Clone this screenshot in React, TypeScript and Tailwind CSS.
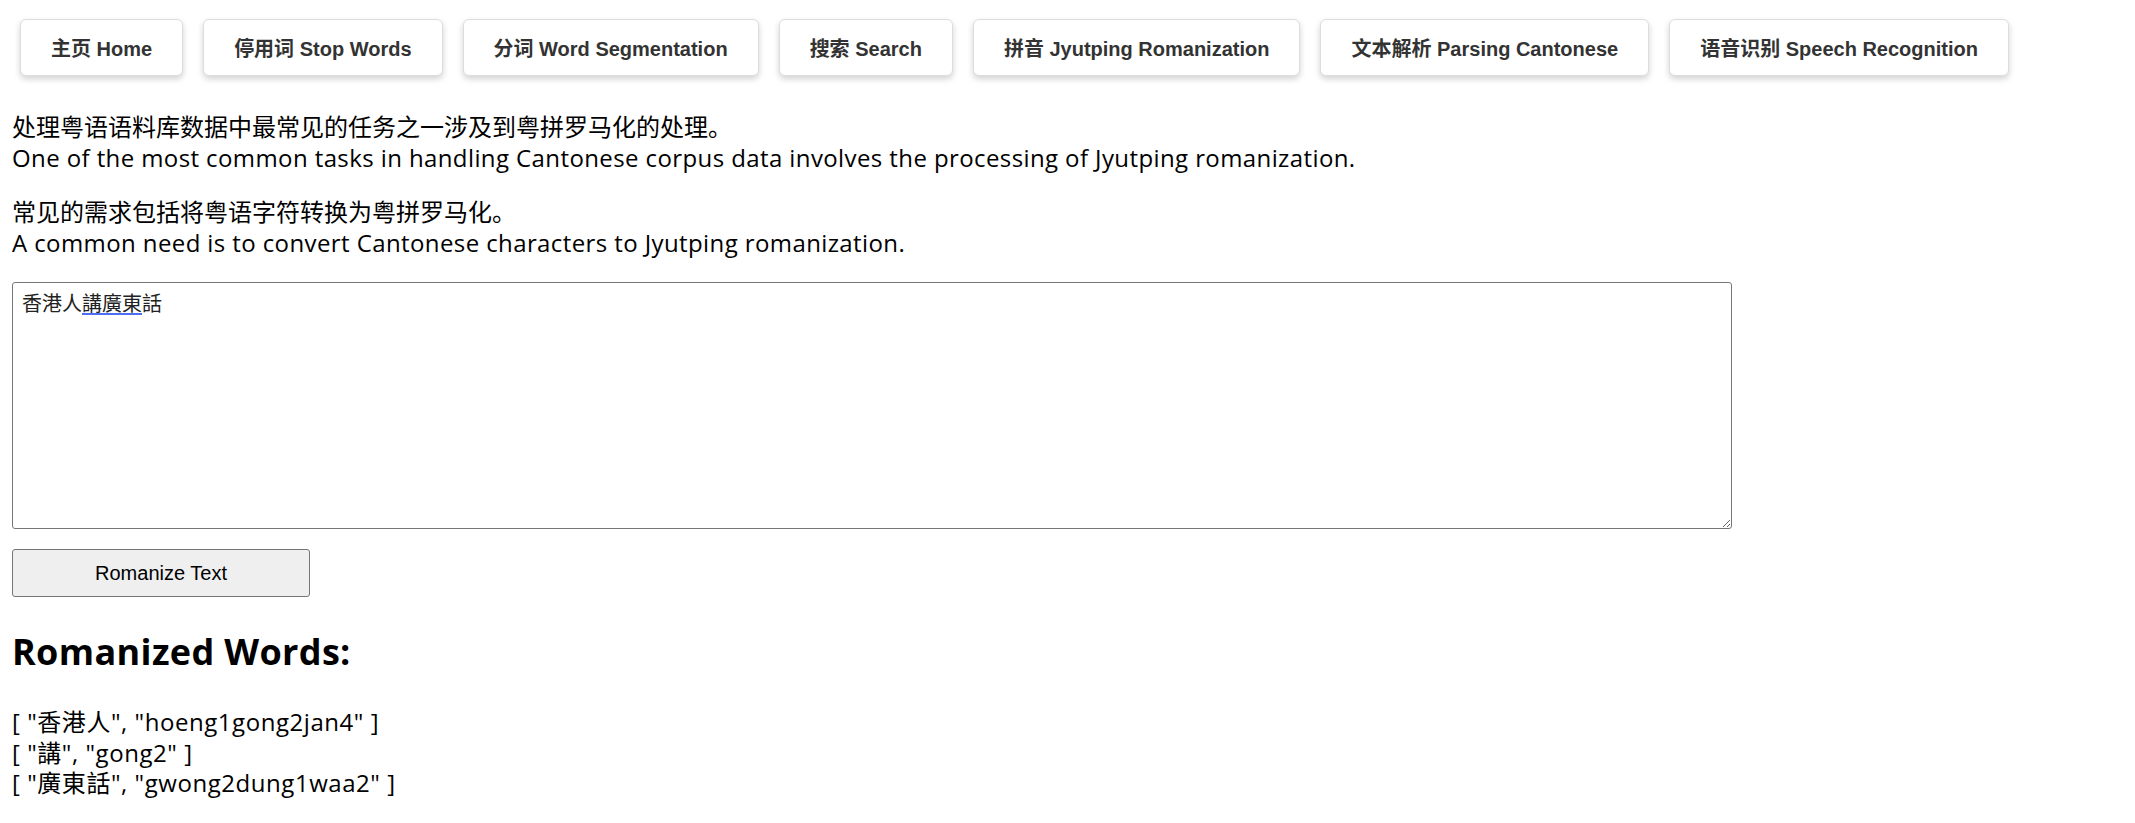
import React from "react";

const navItems = [
  "主页 Home",
  "停用词 Stop Words",
  "分词 Word Segmentation",
  "搜索 Search",
  "拼音 Jyutping Romanization",
  "文本解析 Parsing Cantonese",
  "语音识别 Speech Recognition",
];

const results = [
  '[ "香港人", "hoeng1gong2jan4" ]',
  '[ "講", "gong2" ]',
  '[ "廣東話", "gwong2dung1waa2" ]',
];

const bodyFont = {
  fontFamily: '"Open Sans", "Noto Sans CJK SC", sans-serif',
};

export default function App() {
  return (
    <div className="min-h-screen bg-white text-black" style={bodyFont}>
      <nav
        className="flex gap-[20px] pl-[20px] pt-[19px]"
        style={{ fontFamily: '"Liberation Sans", Arial, "Noto Sans CJK SC", sans-serif' }}
      >
        {navItems.map((t) => (
          <button
            key={t}
            className="rounded-[6px] border border-[#dddddd] bg-white px-[30px] pt-[17px] pb-[13px] text-[20px] font-bold leading-[25px] text-[#333333] shadow-[0_3px_6px_rgba(0,0,0,0.18)] whitespace-nowrap"
          >
            {t}
          </button>
        ))}
      </nav>

      <div className="px-[12px]">
        <p className="mt-[36px] text-[24px] leading-[30.5px]">
          处理粤语语料库数据中最常见的任务之一涉及到粤拼罗马化的处理。
          <br />
          <span className="tracking-[0.4px]">
            One of the most common tasks in handling Cantonese corpus data involves the processing of Jyutping romanization.
          </span>
        </p>
        <p className="mt-[24px] text-[24px] leading-[30.5px]">
          常见的需求包括将粤语字符转换为粤拼罗马化。
          <br />
          <span className="tracking-[0.4px]">
            A common need is to convert Cantonese characters to Jyutping romanization.
          </span>
        </p>

        <div className="relative mt-[24px] w-[1720px]">
          <textarea
            spellCheck={false}
            defaultValue="香港人講廣東話"
            className="block h-[247px] w-[1720px] rounded-[3px] border border-[#767676] bg-white p-[9px] text-[20px] leading-[24px] text-[#222222] outline-none"
            style={{ fontFamily: '"Liberation Serif", "Noto Sans CJK TC", serif' }}
          />
          <div className="pointer-events-none absolute left-[70px] top-[31px] h-[2px] w-[60px] bg-[#4b6ef5]" />
        </div>

        <button
          className="mt-[20px] block h-[48px] w-[298px] rounded-[3px] border border-[#767676] bg-[#efefef] text-[20px] text-black"
          style={{ fontFamily: '"Liberation Sans", Arial, sans-serif' }}
        >
          Romanize Text
        </button>

        <h2 className="mt-[31px] text-[36px] font-bold leading-[48px] tracking-[0.35px]">Romanized Words:</h2>

        <div className="mt-[31px] text-[24px] leading-[30.5px] tracking-[0.55px]">
          {results.map((r) => (
            <div key={r}>{r}</div>
          ))}
        </div>
      </div>
    </div>
  );
}
